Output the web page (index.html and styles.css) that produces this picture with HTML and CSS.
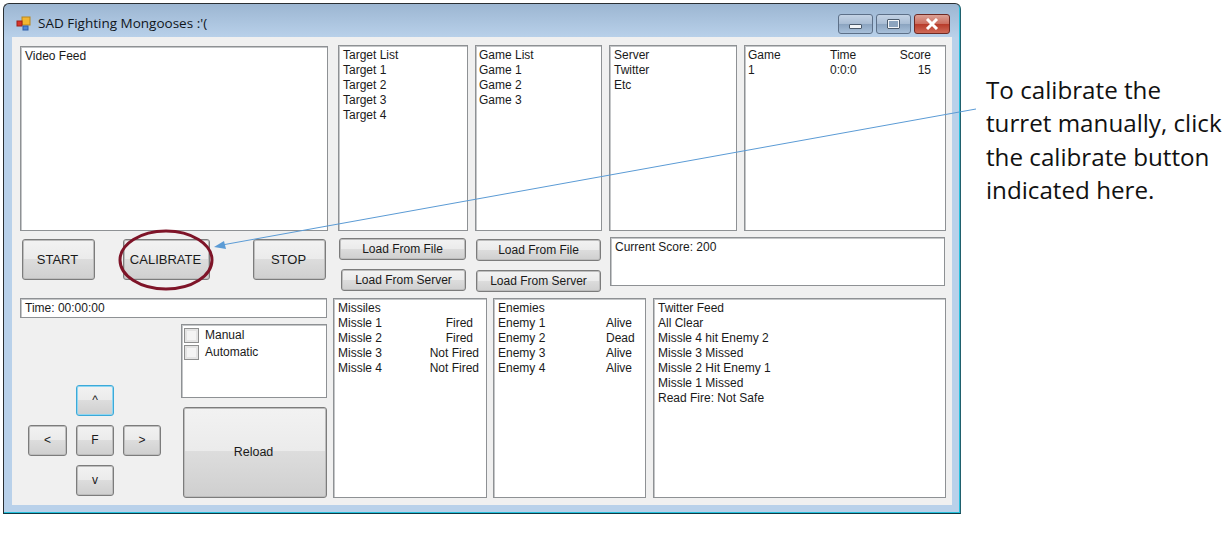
FILE: index.html
```html
<!DOCTYPE html>
<html lang="en">

<head>
    <meta charset="UTF-8" />
    <title>SAD Fighting Mongooses</title>
    <link rel="stylesheet" href="styles.css">
</head>

<body>
    <div class="page">
        <div class="window">
            <div class="titlebar">
                <svg class="app-icon" width="15" height="15" viewBox="0 0 15 15">
                    <rect x="6" y="1" width="8" height="8" fill="#f2b632" stroke="#b9851a" />
                    <rect x="1" y="5" width="5" height="5" fill="#d8342a" stroke="#9c2018" />
                    <rect x="7" y="10" width="5" height="4" fill="#4f86d8" stroke="#2f5ea8" />
                </svg>
                <span class="title">SAD Fighting Mongooses :'(</span>
                <div class="caption-btns">
                    <div class="cap-btn"><span class="glyph-min"></span></div>
                    <div class="cap-btn"><span class="glyph-max"></span></div>
                    <div class="cap-btn cap-close">
                        <svg width="14" height="12" viewBox="0 0 14 12">
                            <path d="M2 1 L12 11 M12 1 L2 11" stroke="#fff" stroke-width="3" />
                        </svg>
                    </div>
                </div>
            </div>

            <div class="client">
                <div class="row-top">
                    <div class="box video">Video Feed</div>
                    <div class="box target">
                        <div>Target List</div>
                        <div>Target 1</div>
                        <div>Target 2</div>
                        <div>Target 3</div>
                        <div>Target 4</div>
                    </div>
                    <div class="box games">
                        <div>Game List</div>
                        <div>Game 1</div>
                        <div>Game 2</div>
                        <div>Game 3</div>
                    </div>
                    <div class="box servers">
                        <div>Server</div>
                        <div>Twitter</div>
                        <div>Etc</div>
                    </div>
                    <div class="box scores">
                        <div class="score-row"><span>Game</span><span>Time</span><span class="right">Score</span></div>
                        <div class="score-row"><span>1</span><span>0:0:0</span><span class="right">15</span></div>
                    </div>
                </div>

                <div class="row-mid">
                    <div class="btn big start">START</div>
                    <div class="btn big calibrate">CALIBRATE</div>
                    <div class="btn big stop">STOP</div>
                    <div class="load-col first">
                        <div class="btn load wide">Load From File</div>
                        <div class="btn load">Load From Server</div>
                    </div>
                    <div class="load-col second">
                        <div class="btn load">Load From File</div>
                        <div class="btn load">Load From Server</div>
                    </div>
                    <div class="box current">Current Score: 200</div>
                </div>

                <div class="row-bottom">
                    <div class="controls">
                        <div class="box time">Time: 00:00:00</div>
                        <div class="controls-body">
                            <div class="dpad">
                                <div class="btn focus up">^</div>
                                <div class="btn left">&lt;</div>
                                <div class="btn fire">F</div>
                                <div class="btn right-btn">&gt;</div>
                                <div class="btn down">v</div>
                            </div>
                            <div class="side">
                                <div class="box modes">
                                    <div class="check"><span class="checkbox"></span>Manual</div>
                                    <div class="check"><span class="checkbox"></span>Automatic</div>
                                </div>
                                <div class="btn reload">Reload</div>
                            </div>
                        </div>
                    </div>
                    <div class="box missiles">
                        <div>Missiles</div>
                        <div class="status-row"><span>Missle 1</span><span class="fired">Fired</span></div>
                        <div class="status-row"><span>Missle 2</span><span class="fired">Fired</span></div>
                        <div class="status-row"><span>Missle 3</span><span>Not Fired</span></div>
                        <div class="status-row"><span>Missle 4</span><span>Not Fired</span></div>
                    </div>
                    <div class="box enemies">
                        <div>Enemies</div>
                        <div class="enemy-row"><span>Enemy 1</span><span>Alive</span></div>
                        <div class="enemy-row"><span>Enemy 2</span><span>Dead</span></div>
                        <div class="enemy-row"><span>Enemy 3</span><span>Alive</span></div>
                        <div class="enemy-row"><span>Enemy 4</span><span>Alive</span></div>
                    </div>
                    <div class="box twitter">
                        <div>Twitter Feed</div>
                        <div>All Clear</div>
                        <div>Missle 4 hit Enemy 2</div>
                        <div>Missle 3 Missed</div>
                        <div>Missle 2 Hit Enemy 1</div>
                        <div>Missle 1 Missed</div>
                        <div>Read Fire: Not Safe</div>
                    </div>
                </div>
            </div>
        </div>

        <p class="callout">To calibrate the turret manually, click the calibrate button indicated here.</p>
    </div>

    <!-- annotation drawn over the window -->
    <svg class="overlay" width="1230" height="545" viewBox="0 0 1230 545">
        <ellipse cx="166" cy="260" rx="46" ry="29" fill="none" stroke="#7e1428" stroke-width="3" />
        <line x1="976" y1="109" x2="222" y2="245" stroke="#5b9bd5" stroke-width="1" />
        <path d="M214 247 L224 241 L226 249 Z" fill="#5b9bd5" />
    </svg>
</body>

</html>
```

FILE: styles.css
```css
body {
    margin: 0;
    background-color: white;
    font-family: "Liberation Sans", Arial, sans-serif;
    font-size: 12px;
    line-height: 15px;
    color: #1a1a1a;
}

.page {
    display: flex;
    align-items: flex-start;
    padding: 3px 0 0 3px;
}

.window {
    width: 958px;
    height: 511px;
    box-sizing: border-box;
    flex-shrink: 0;
    display: flex;
    flex-direction: column;
    border: 1px solid #2a2f33;
    border-right-color: #20606c;
    border-bottom-color: #103a44;
    border-radius: 6px 6px 0 0;
    background: linear-gradient(#9cb6d2 0, #b9d1ea 34px, #b9d1ea 100%);
    box-shadow: inset -1px -1px 0 #25c0dc;
}

.titlebar {
    height: 33px;
    box-sizing: border-box;
    padding-top: 6px;
    display: flex;
    align-items: center;
    flex-shrink: 0;
}

.app-icon {
    margin-left: 12px;
}

.title {
    margin-left: 7px;
    font-family: "Open Sans", sans-serif;
    font-size: 13.5px;
    color: #10161c;
}

.caption-btns {
    margin-left: auto;
    margin-right: 10px;
    display: flex;
    gap: 3px;
}

.cap-btn {
    width: 35px;
    height: 20px;
    box-sizing: border-box;
    display: flex;
    align-items: center;
    justify-content: center;
    border: 1px solid #5d7088;
    border-radius: 3px;
    background: linear-gradient(#c4d3e5 0, #a9bdd4 48%, #8ba4c0 52%, #a8c0da 100%);
}

.cap-close {
    width: 36px;
    border-color: #6e2a24;
    background: linear-gradient(#dca196 0, #cc6f60 48%, #b83c2b 52%, #cf6a58 100%);
}

.glyph-min {
    width: 13px;
    height: 5px;
    margin-top: 5px;
    box-sizing: border-box;
    background-color: #f2f5f8;
    border: 1px solid #4a5a6c;
    border-radius: 1px;
}

.glyph-max {
    width: 13px;
    height: 10px;
    box-sizing: border-box;
    background-color: #8ca4be;
    border: 2px solid #f2f5f8;
    outline: 1px solid #4a5a6c;
    outline-offset: -1px;
    border-radius: 1px;
}

.client {
    flex: 1;
    margin: 0 8px 8px 8px;
    padding: 8px 0 0 8px;
    background-color: #f0f0f0;
}

.box {
    box-sizing: border-box;
    background-color: white;
    border: 1px solid #8e9194;
    box-shadow: inset 1px 1px 0 #c4c6c8;
    padding: 2px 4px;
}

.row-top {
    display: flex;
    gap: 7px;
    height: 186px;
}

.video {
    width: 308px;
    height: 185px;
    margin-top: 1px;
    margin-right: 3px;
}

.target {
    width: 130px;
}

.games {
    width: 127px;
    padding-left: 3px;
}

.servers {
    width: 128px;
}

.scores {
    width: 202px;
    padding-left: 3px;
}

.score-row {
    display: grid;
    grid-template-columns: 82px 69px 32px;
}

.right {
    text-align: right;
}

.btn {
    box-sizing: border-box;
    display: flex;
    align-items: center;
    justify-content: center;
    color: #1a1a1a;
    border: 1px solid #7c7c7c;
    border-radius: 3px;
    box-shadow: inset 0 0 0 1px #bdbdbd;
    background: linear-gradient(#f2f2f2 0, #ebebeb 48%, #dddddd 48%, #cfcfcf 100%);
}

.row-mid {
    display: flex;
    height: 61px;
    margin-top: 6px;
}

.big {
    width: 73px;
    height: 41px;
    margin-top: 2px;
    padding-right: 2px;
    font-size: 13px;
}

.start {
    margin-left: 2px;
}

.calibrate {
    width: 87px;
    margin-left: 28px;
}

.stop {
    margin-left: 43px;
}

.load-col {
    width: 127px;
    display: flex;
    flex-direction: column;
    align-items: flex-end;
    gap: 9px;
}

.first {
    margin: 1px 0 0 13px;
}

.second {
    margin: 2px 0 0 8px;
}

.load {
    width: 125px;
    height: 22px;
}

.wide {
    width: 127px;
}

.current {
    width: 335px;
    height: 49px;
    margin-left: 9px;
}

.row-bottom {
    display: flex;
}

.controls {
    width: 307px;
    margin-right: 6px;
}

.time {
    height: 20px;
    padding: 2px 4px;
}

.controls-body {
    display: flex;
    justify-content: space-between;
    height: 180px;
    margin-top: 6px;
}

.dpad {
    display: grid;
    grid-template-columns: 39px 38px 38px;
    grid-template-rows: repeat(3, 31px);
    gap: 9px;
    align-self: flex-end;
    margin: 0 0 8px 8px;
}

.up {
    grid-column: 2;
    grid-row: 1;
}

.left {
    grid-column: 1;
    grid-row: 2;
}

.fire {
    grid-column: 2;
    grid-row: 2;
}

.right-btn {
    grid-column: 3;
    grid-row: 2;
}

.down {
    grid-column: 2;
    grid-row: 3;
}

.focus {
    border-color: #3ca9d8;
    box-shadow: inset 0 0 0 1px #8fd6f2;
}

.side {
    width: 146px;
    display: flex;
    flex-direction: column;
    align-items: flex-end;
}

.modes {
    width: 146px;
    height: 74px;
    padding: 2px;
}

.check {
    height: 17px;
    display: flex;
    align-items: center;
}

.checkbox {
    width: 13px;
    height: 13px;
    margin-right: 6px;
    border: 1px solid #8e8f8f;
    box-shadow: inset 0 0 0 2px #e4e4e4;
    background-color: #f4f4f4;
}

.reload {
    width: 144px;
    height: 91px;
    margin-top: 9px;
    padding-right: 3px;
    font-size: 12.5px;
}

.missiles {
    width: 154px;
    height: 200px;
    margin-right: 6px;
}

.status-row {
    display: flex;
    justify-content: space-between;
    padding-right: 3px;
}

.fired {
    margin-right: 6px;
}

.enemies {
    width: 153px;
    height: 200px;
    margin-right: 7px;
}

.enemy-row {
    display: grid;
    grid-template-columns: 108px 1fr;
}

.twitter {
    width: 293px;
    height: 200px;
}

.callout {
    width: 240px;
    margin: 70px 0 0 25px;
    flex-shrink: 0;
    font-family: "Open Sans", sans-serif;
    font-size: 24.2px;
    line-height: 33.3px;
    color: #111;
}

.overlay {
    position: absolute;
    top: 0;
    left: 0;
    pointer-events: none;
}
```
